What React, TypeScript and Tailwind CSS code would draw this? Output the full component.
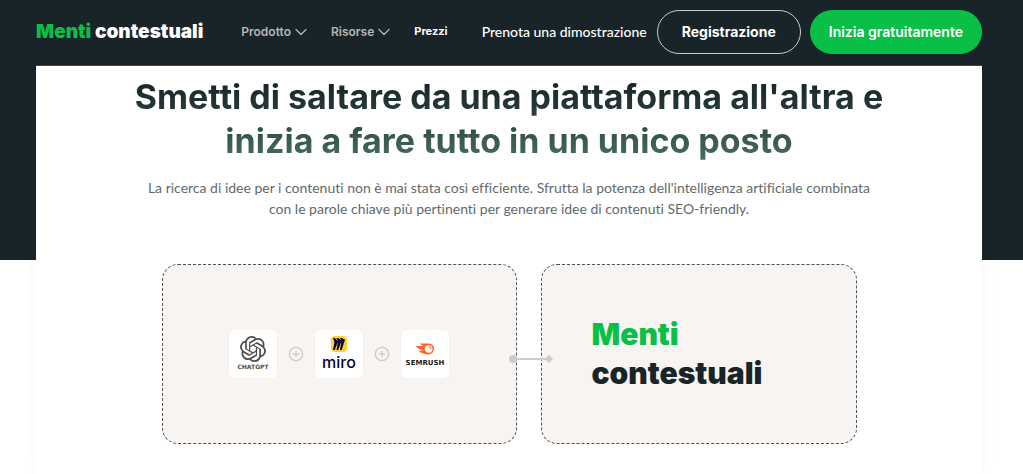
import type { ReactNode } from 'react';
import { ChevronDown, CirclePlus } from 'lucide-react';
import { SiMiro, SiOpenai, SiSemrush } from 'react-icons/si';

interface ToolTileProps {
  name: string;
  icon: ReactNode;
  labelClass: string;
}

function NavMenu({ label }: { label: string }) {
  return (
    <button type="button" className="flex items-center text-xs font-semibold text-[#b3b7b8]">
      {label}
      <ChevronDown className="w-5 h-5 shrink-0" strokeWidth={1.5} />
    </button>
  );
}

function ToolTile({ name, icon, labelClass }: ToolTileProps) {
  return (
    <div className="flex flex-col items-center justify-center w-[50px] h-[50px] rounded-md border border-[#f4f1ef] bg-white">
      {icon}
      <span className={labelClass}>{name}</span>
    </div>
  );
}

function PlusMark() {
  return <CirclePlus className="w-4 h-4 shrink-0 text-[#cccaca]" strokeWidth={2} />;
}

function Header() {
  return (
    <header className="flex items-center h-[65px] pl-9 pr-[41px] pb-[2px] bg-[#192428] text-white whitespace-nowrap">
      <a href="#" className="text-[19px] leading-7 font-black">
        <span className="text-[#0abf47]">Menti</span> contestuali
      </a>
      <nav className="flex items-center gap-5 ml-[38px]">
        <NavMenu label="Prodotto" />
        <NavMenu label="Risorse" />
        <a href="#" className="text-[11px] font-bold">
          Prezzi
        </a>
      </nav>
      <div className="flex items-center ml-auto">
        <a href="#" className="mr-[10px] text-[14px] font-medium font-['Lato',sans-serif]">
          Prenota una dimostrazione
        </a>
        <button
          type="button"
          className="h-11 px-6 mr-[9px] rounded-full border border-[#c6cacb] text-sm font-bold"
        >
          Registrazione
        </button>
        <button
          type="button"
          className="h-11 px-[19px] rounded-full bg-[#0abf47] text-sm font-semibold"
        >
          Inizia gratuitamente
        </button>
      </div>
    </header>
  );
}

export default function App() {
  return (
    <div className="min-h-screen flex flex-col bg-white font-['Inter',sans-serif] [font-variant-ligatures:none]">
      <Header />
      <section className="flex-1 flex flex-col pl-9 pr-[41px] bg-[linear-gradient(#192428_195px,#fff_195px)]">
        <div className="flex-1 flex flex-col items-center pt-[9px] pb-[30px] border-t border-[#3e484b] bg-white shadow-[0_0_16px_rgba(0,0,0,0.04)]">
          <h1 className="text-[34px] leading-[44px] font-bold text-center">
            <span className="block bg-linear-to-b from-[#142024] to-[#2b413f] bg-clip-text text-transparent">
              Smetti di saltare da una piattaforma all'altra e
            </span>
            <span className="block bg-linear-to-b from-[#2b4642] to-[#4a7064] bg-clip-text text-transparent">
              inizia a fare tutto in un unico posto
            </span>
          </h1>
          <p className="max-w-[740px] mt-[14px] text-[14px] leading-[21px] text-center text-[#626a6c] font-['Lato',sans-serif]">
            La ricerca di idee per i contenuti non è mai stata così efficiente. Sfrutta la potenza
            dell'intelligenza artificiale combinata con le parole chiave più pertinenti per generare
            idee di contenuti SEO-friendly.
          </p>

          <div className="grid grid-cols-[355fr_316fr] gap-6 w-full max-w-[695px] mt-[45px]">
            <div className="relative flex items-center justify-center gap-[10px] h-[180px] rounded-2xl border border-dashed border-[#4b5456] bg-[#f8f4f1]">
              <ToolTile
                name="CHATGPT"
                icon={<SiOpenai className="w-[26px] h-[26px] text-[#4a4e50]" />}
                labelClass="text-[6px] leading-[10px] font-bold text-[#4a4e50] font-['DejaVu_Sans',sans-serif]"
              />
              <PlusMark />
              <ToolTile
                name="miro"
                icon={
                  <span className="flex p-[2px] rounded-sm bg-[#ffd02f]">
                    <SiMiro className="w-3 h-3 text-[#050038]" />
                  </span>
                }
                labelClass="text-[16px] leading-5 font-medium text-[#050038]"
              />
              <PlusMark />
              <ToolTile
                name="SEMRUSH"
                icon={<SiSemrush className="w-[18px] h-[18px] text-[#ff642d]" />}
                labelClass="text-[7px] leading-[10px] font-bold text-[#171a22] font-['DejaVu_Sans',sans-serif]"
              />
              {/* Connector between the two panels */}
              <svg
                className="absolute -right-[37px] top-1/2 z-10 w-11 h-[10px] text-[#cccccc]"
                viewBox="0 0 44 10"
                fill="currentColor"
              >
                <circle cx="4" cy="5" r="4" />
                <path d="M4 4h36v2H4zM40 1l4 4-4 4-4-4z" />
              </svg>
            </div>
            <div className="flex items-center h-[180px] pl-[50px] rounded-2xl border border-dashed border-[#4b5456] bg-[#f8f4f1]">
              <p className="text-[30px] leading-[39px] font-black text-[#192428]">
                <span className="block text-[#0abf47]">Menti</span>
                contestuali
              </p>
            </div>
          </div>
        </div>
      </section>
    </div>
  );
}
